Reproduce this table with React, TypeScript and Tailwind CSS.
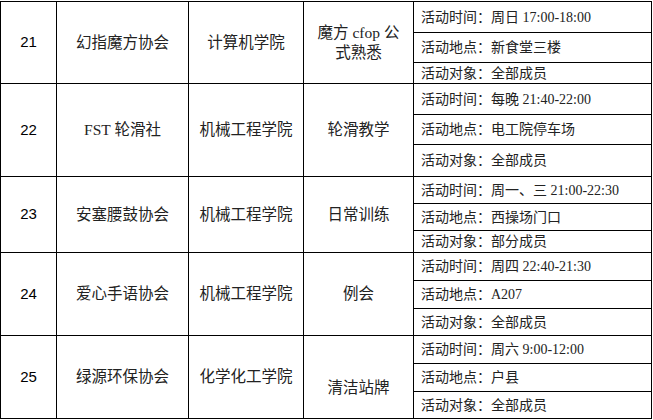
const rows = [
  {
    no: "21",
    club: "幻指魔方协会",
    school: "计算机学院",
    topic: (
      <>
        魔方 cfop 公<br />式熟悉
      </>
    ),
    topicClass: "",
    time: "周日 17:00-18:00",
    place: "新食堂三楼",
    who: "全部成员",
  },
  {
    no: "22",
    club: "FST 轮滑社",
    school: "机械工程学院",
    topic: "轮滑教学",
    topicClass: "",
    time: "每晚 21:40-22:00",
    place: "电工院停车场",
    who: "全部成员",
  },
  {
    no: "23",
    club: "安塞腰鼓协会",
    school: "机械工程学院",
    topic: "日常训练",
    topicClass: "",
    time: "周一、三 21:00-22:30",
    place: "西操场门口",
    who: "部分成员",
  },
  {
    no: "24",
    club: "爱心手语协会",
    school: "机械工程学院",
    topic: "例会",
    topicClass: "",
    time: "周四 22:40-21:30",
    place: "A207",
    who: "全部成员",
  },
  {
    no: "25",
    club: "绿源环保协会",
    school: "化学化工学院",
    topic: "清洁站牌",
    topicClass: "pt-[22px]",
    time: "周六 9:00-12:00",
    place: "户县",
    who: "全部成员",
  },
];

const serif = "font-['Liberation_Serif','Noto_Sans_CJK_SC',serif]";

export default function App() {
  return (
    <div className="w-[653px] h-[420px] bg-white pt-px">
      <div className="grid w-[652px] grid-cols-[55px_131px_114px_109px_237px] grid-rows-[30px_29px_20px_30px_29px_31px_26px_26px_21px_27px_27px_26px_27px_27px_26px] gap-px bg-black p-px">
        {rows.map((r) => (
          <Row key={r.no} r={r} />
        ))}
      </div>
    </div>
  );
}

function Row({ r }: { r: (typeof rows)[number] }) {
  const center = "row-span-3 bg-white flex items-center justify-center text-center";
  return (
    <>
      <div className={`${center} font-['Liberation_Sans',sans-serif] text-[15px] text-black`}>
        {r.no}
      </div>
      <div className={`${center} ${serif} text-[15.5px] text-[#222]`}>{r.club}</div>
      <div className={`${center} ${serif} text-[15.5px] text-[#222]`}>{r.school}</div>
      <div className={`${center} ${serif} text-[15.5px] leading-[20px] text-[#222] ${r.topicClass}`}>
        <span>{r.topic}</span>
      </div>
      <Info text={`活动时间：${r.time}`} />
      <Info text={`活动地点：${r.place}`} />
      <Info text={`活动对象：${r.who}`} />
    </>
  );
}

function Info({ text }: { text: string }) {
  return (
    <div className={`bg-white flex items-center pl-[7px] ${serif} text-[14px] text-[#222] whitespace-nowrap`}>
      {text}
    </div>
  );
}
